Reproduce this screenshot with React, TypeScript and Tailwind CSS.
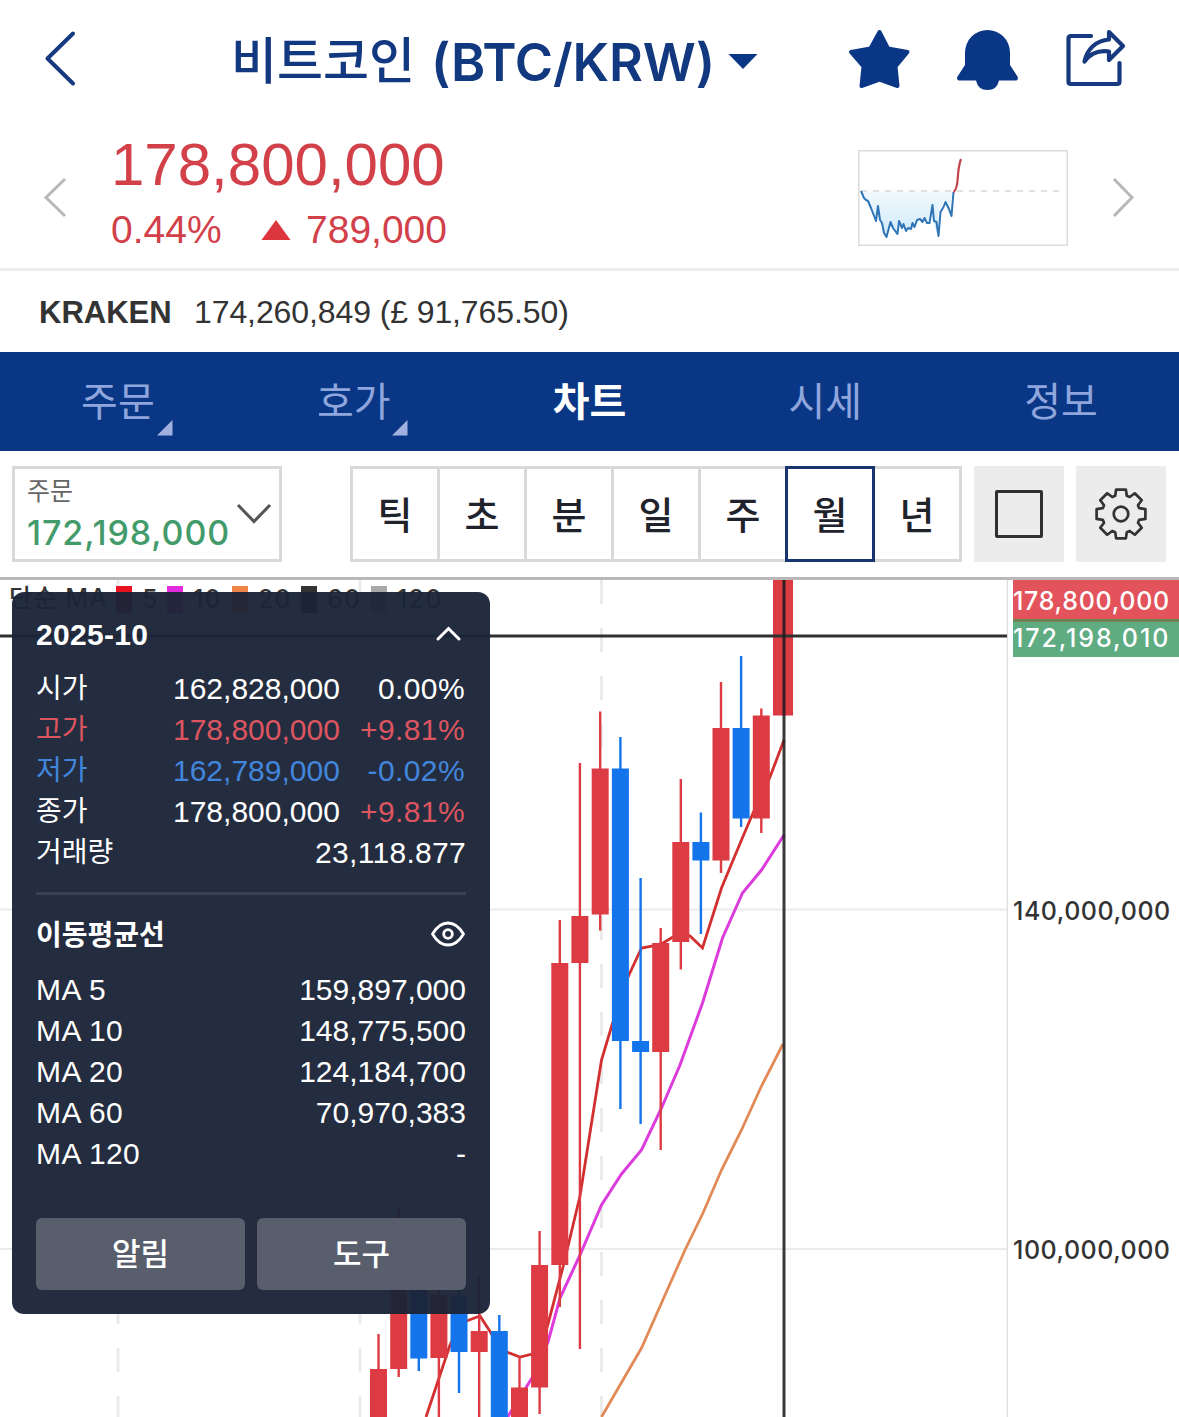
import React, { useState } from 'react';
import clsx from 'clsx';

// ─── data ─────────────────────────────────────────────────────────────────────

const navTabs = [
  { label: '주문', more: true },
  { label: '호가', more: true },
  { label: '차트', more: false },
  { label: '시세', more: false },
  { label: '정보', more: false },
];

const periods = ['틱', '초', '분', '일', '주', '월', '년'];

const legend = [
  { label: '5',   cls: 'bg-[#e8131f]', width: 'w-[25px]' },
  { label: '10',  cls: 'bg-[#e42be0]', width: 'w-[39px]' },
  { label: '20',  cls: 'bg-[#ee8445]', width: 'w-[43px]' },
  { label: '60',  cls: 'bg-[#333333]', width: 'w-[44px]' },
  { label: '120', cls: 'bg-[#a9a9a9]', width: 'w-[60px]' },
];

const ohlc = [
  { label: '시가', value: '162,828,000', rate: '0.00%',  cls: 'text-white',      rateCls: 'text-white' },
  { label: '고가', value: '178,800,000', rate: '+9.81%', cls: 'text-[#dc5560]', rateCls: 'text-[#dc5560]' },
  { label: '저가', value: '162,789,000', rate: '-0.02%', cls: 'text-[#4285dc]', rateCls: 'text-[#4285dc]' },
  { label: '종가', value: '178,800,000', rate: '+9.81%', cls: 'text-white',      rateCls: 'text-[#dc5560]' },
];

const averages = [
  ['MA 5', '159,897,000'],
  ['MA 10', '148,775,500'],
  ['MA 20', '124,184,700'],
  ['MA 60', '70,970,383'],
  ['MA 120', '-'],
];

// x, wick top, body top, body bottom, wick bottom, rising
type Candle = [number, number, number, number, number, boolean];

const candles: Candle[] = [
  [378.5, 1334, 1369, 1430, 1430, true],
  [398.7, 1207, 1280, 1369, 1377, true],
  [418.8, 1270, 1285, 1358.5, 1371, false],
  [438.9, 1285, 1295, 1358, 1430, true],
  [459, 1285, 1296, 1352, 1393, false],
  [479.2, 1277, 1331, 1352, 1430, true],
  [499.3, 1315, 1331, 1430, 1430, false],
  [519.5, 1356, 1387.5, 1430, 1430, true],
  [539.6, 1231, 1265, 1387.5, 1414, true],
  [559.8, 920, 963, 1265, 1307, true],
  [579.9, 763, 916, 963, 1349, true],
  [600.2, 711.5, 768.5, 914.5, 930.5, true],
  [620.4, 737, 768.5, 1041, 1109, false],
  [640.6, 878, 1041, 1052, 1124, false],
  [660.7, 928, 943, 1052, 1150, true],
  [680.8, 779, 842, 942, 969.5, true],
  [700.9, 812.5, 842, 860.5, 934, false],
  [721, 682, 728, 860.5, 873, true],
  [741.1, 656, 728, 818.5, 827, false],
  [761.3, 708.5, 715.5, 818.5, 833, true],
];

const ma5 = '426,1417 450,1345 461,1323 480,1316 491,1333 501,1350 520,1357 540,1352 548,1324 563,1267 580,1196 601.5,1060 612,1025 628,977 641.5,948 653,946 663,943 673,937 681,932 690,936 702.5,948 721.5,888 741.5,840 753,813 761.5,796 770,777 784,740';
const ma10 = '507,1418 532,1378 548,1342 560,1298 580,1255 601.5,1205 621.5,1174 641.5,1150 661.5,1108 680,1065 702.5,1003 722.5,938 742.5,893 761.5,870 784,835';
const ma20 = '601.5,1417 641.5,1348 661.5,1303 685,1250 703,1213 721.5,1170 741.5,1130 761.5,1086 783,1044';

// ─── icons ────────────────────────────────────────────────────────────────────

const ShareIcon = () => (
  <svg width="64" height="64" viewBox="1064 28 64 64" fill="none" stroke="#17397f" strokeWidth="4.2" strokeLinecap="round" strokeLinejoin="round">
    <path d="M1091 36H1071Q1068.500 36 1068.500 38.500V81.500Q1068.500 84 1071 84H1117Q1119.500 84 1119.500 81.500V63" />
    <path d="M1109 32 1123 46 1109 60V51.500C1098 50 1090 54 1084.500 61.500C1087 49 1096 40.500 1109 39.500Z" />
  </svg>
);

const GearIcon = () => {
  const points = Array.from({ length: 8 }, (_, i) => {
    const a = (i * Math.PI) / 4;
    return [[-5.8, -18.2], [-4.9, -24.4], [4.9, -24.4], [5.8, -18.2]]
      .map(([x, y]) => `${x * Math.cos(a) - y * Math.sin(a)},${x * Math.sin(a) + y * Math.cos(a)}`)
      .join(' ');
  }).join(' ');
  return (
    <svg width="54" height="54" viewBox="-27 -27 54 54" fill="none" stroke="#333" strokeWidth="2.7" strokeLinejoin="round">
      <polygon points={points} />
      <circle r="7.300" />
    </svg>
  );
};

const Sparkline = () => (
  <svg width="210" height="96" viewBox="0 0 210 96" fill="none">
    <defs>
      <linearGradient id="dip" x1="0" y1="0" x2="0" y2="1">
        <stop offset="0" stopColor="#f3f9fd" />
        <stop offset="1" stopColor="#cdeafa" />
      </linearGradient>
    </defs>
    <rect x=".75" y=".75" width="208.500" height="94.500" stroke="#dcdcdc" strokeWidth="1.500" />
    <path d="M3 41 6 48 10 50 13 57 18 71 20 56 23 70 25 80 28 87 32 73 37 83 39 85 41 72 44 80 47 76 49 81 52 77 54 79 56 72 58 76 61 69 64 70 68 69 70 73 73 59 75 70 79 84 81 62 85 52 89 58 92 66 94 42 96 41Z" fill="url(#dip)" />
    <path d="M3 41H203" stroke="#d8d8d8" strokeWidth="1.500" strokeDasharray="6 6" />
    <path d="M3 41 6 48 8 50 10 51 13 58 18 71 20 56 22 70 24 73 26 83 28.500 87 32.500 72 35 78 39.500 84 41 71 44 78 45.500 74 48 81 50 78 53 79 54.500 73 56.500 77 59 70 62 69 64.500 72 66.500 68 69 73 71.500 73 73 64 74.500 55 76 71 78.500 72 80.500 86 82.500 62 85.500 57 87.500 52 91 59 93.500 66 95.500 42" stroke="#2f74b5" strokeWidth="2" strokeLinejoin="round" />
    <path d="M95.500 42Q98.500 40 99.500 31Q100.500 15 103 9" stroke="#c0434c" strokeWidth="2.200" />
  </svg>
);

// ─── chart ────────────────────────────────────────────────────────────────────

const CandleChart = () => (
  <svg width="1008" height="837" viewBox="0 580 1008 837" fill="none" className="block shrink-0">
    <path d="M0 909.500H1007M0 1249H1007" stroke="#ebebeb" strokeWidth="2" />
    <path d="M118 580V1417M360 580V1417M601.500 580V1417" stroke="#ebebeb" strokeWidth="3" strokeDasharray="24 24" />
    <path d="M1007.500 580V1417" stroke="#dedede" strokeWidth="1.500" />
    <polyline points={ma20} stroke="#e28a57" strokeWidth="2.800" />
    <polyline points={ma10} stroke="#dc3cdc" strokeWidth="3" />
    <polyline points={ma5} stroke="#d23030" strokeWidth="2.800" />
    {candles.map(([x, high, top, bottom, low, up]) => (
      <g key={x} fill={up ? '#dd3b44' : '#1474ec'}>
        <rect x={x - 1.2} y={high} width="2.400" height={low - high} />
        <rect x={x - 8.5} y={top} width="17" height={bottom - top} />
      </g>
    ))}
    <rect x="773" y="580" width="20" height="135.500" fill="#dd3b44" />
    <path d="M0 636H1007" stroke="#303030" strokeWidth="3" />
    <path d="M784 580V1417" stroke="#1b1b1b" strokeOpacity=".86" strokeWidth="3" />
  </svg>
);

const InfoPanel = () => (
  <div className="absolute left-3 top-3 flex h-[722px] w-[478px] flex-col rounded-xl bg-[#1b2437]/96 px-6 pb-6 text-[30px] text-white">
    <div className="flex h-[76px] items-center justify-between pt-2">
      <span className="font-bold tracking-[0.3px]">2025-10</span>
      <svg width="34" height="20" viewBox="0 0 34 20" fill="none" stroke="#fff" strokeWidth="3" strokeLinecap="round">
        <path d="M6 15 16.500 4.500 27 15" />
      </svg>
    </div>
    {ohlc.map(row => (
      <div key={row.label} className={clsx('flex h-[41px] items-center', row.cls)}>
        <span className="w-[137px] text-[28px] leading-[41px]">{row.label}</span>
        <span className="w-[167px]">{row.value}</span>
        <span className={clsx('flex-1 pr-px text-right tracking-[0.4px]', row.rateCls)}>{row.rate}</span>
      </div>
    ))}
    <div className="flex h-[41px] items-center justify-between">
      <span className="text-[28px]">거래량</span>
      <span className="tracking-[0.3px]">23,118.877</span>
    </div>
    <div className="mt-[19px] h-[3px] shrink-0 bg-[#3a4252]" />
    <div className="flex h-[74px] items-center justify-between pt-1">
      <span className="pt-[3px] text-[28px] font-bold">이동평균선</span>
      <svg width="36" height="28" viewBox="0 0 36 28" fill="none" stroke="#fff" strokeWidth="2.800">
        <path d="M2.500 14Q9 3 18 3T33.500 14Q27 25 18 25T2.500 14Z" strokeLinejoin="round" />
        <circle cx="18" cy="14" r="4.300" />
      </svg>
    </div>
    {averages.map(([label, value]) => (
      <div key={label} className="flex h-[41px] items-center justify-between">
        <span className="tracking-[0.4px]">{label}</span>
        <span>{value}</span>
      </div>
    ))}
    <div className="mt-auto grid grid-cols-2 gap-3">
      {['알림', '도구'].map(label => (
        <button key={label} className="h-[72px] rounded-md bg-[#585e6c] pt-[2px] text-[31px] font-medium">{label}</button>
      ))}
    </div>
  </div>
);

// ─── screen ───────────────────────────────────────────────────────────────────

export default function App() {
  const [tab, setTab] = useState('차트');
  const [period, setPeriod] = useState('월');

  return (
    <div className="flex h-[1417px] w-[1179px] flex-col overflow-hidden bg-white font-['Liberation_Sans','Noto_Sans_CJK_KR',sans-serif] whitespace-nowrap">

      {/* Header */}
      <header className="flex h-[120px] shrink-0 items-center text-[#12387f]">
        <svg width="40" height="64" viewBox="0 0 40 64" fill="none" stroke="#17397f" strokeWidth="4" strokeLinecap="round" strokeLinejoin="round" className="ml-[40px]">
          <path d="M33 5.500 7.500 30.500 33 55.500" />
        </svg>
        <h1 className="ml-[151px] flex w-[484px] items-center font-['Inter','Noto_Sans_CJK_KR',sans-serif] text-[50px] font-medium">
          <span className="pb-[5px] font-['Noto_Sans_CJK_KR']">비트코인</span>
          <span className="ml-[16px] pt-[5px] text-[52px] font-semibold tracking-[-0.1px]">(BTC/KRW)</span>
        </h1>
        <svg width="32" height="16" viewBox="0 0 32 16" className="mt-[3px] ml-[12px]">
          <path d="M1.500 0H30.500L16 15Z" fill="#0a3686" />
        </svg>
        <div className="ml-[88px] flex">
          <svg width="64" height="64" viewBox="847 28 64 64" fill="#0a3686" stroke="#0a3686" strokeWidth="4" strokeLinejoin="round">
            <path d="M879.500 32 888 48.500 907.500 52 895.500 66.500 897.500 86 879.500 79.500 861.500 86 863.500 66.500 851 52 870.500 48.500Z" />
          </svg>
          <svg width="64" height="64" viewBox="955 28 64 64" fill="#0a3686" className="ml-[44px]">
            <path d="M965 52.500A22.500 22.500 0 0 1 1010 52.500V65L1017.500 76.500Q1019 80.500 1015 80.500H999Q997 90 987.500 90T976 80.500H960Q956 80.500 957.500 76.500L965 65Z" />
          </svg>
          <div className="ml-[45px]"><ShareIcon /></div>
        </div>
      </header>

      {/* Price */}
      <section className="flex h-[151px] shrink-0 border-b-[3px] border-[#ececec] text-[#d2404a]">
        <svg width="26" height="44" viewBox="0 0 26 44" fill="none" stroke="#b8b8b8" strokeWidth="3" className="mt-[55px] ml-[43px]">
          <path d="M22 4 3 22.500 22 41" />
        </svg>
        <div className="ml-[42px] w-[747px]">
          <div className="mt-[12px] h-[66px] text-[60px] leading-[66px]">178,800,000</div>
          <div className="mt-[10px] flex h-[44px] items-center text-[39px]">
            <span className="w-[150px]">0.44%</span>
            <svg width="30" height="20" viewBox="0 0 30 20"><path d="M15 0 29.500 20H.5Z" fill="#dc353d" /></svg>
            <span className="ml-[15px]">789,000</span>
          </div>
        </div>
        <div className="mt-[30px]"><Sparkline /></div>
        <svg width="26" height="44" viewBox="0 0 26 44" fill="none" stroke="#b8b8b8" strokeWidth="3" className="mt-[55px] ml-[42px]">
          <path d="M4 4 22 22.500 4 41" />
        </svg>
      </section>

      <section className="flex h-[81px] shrink-0 items-center pl-[39px] text-[32px] text-[#333]">
        <b className="w-[155px] pt-[4px] text-[31px]">KRAKEN</b>
        <span className="tracking-[-0.1px]">174,260,849 (£ 91,765.50)</span>
      </section>

      {/* Tabs */}
      <nav className="flex h-[99px] shrink-0 bg-[#0a3686]">
        {navTabs.map(({ label, more }) => (
          <button
            key={label}
            onClick={() => setTab(label)}
            className={clsx('relative flex-1 text-[40px]', tab === label ? 'font-bold text-white' : 'text-[#8fa6dd]')}
          >
            {label}
            {more && (
              <svg width="16" height="16" viewBox="0 0 16 16" className="absolute bottom-[15px] left-[156.500px]">
                <path d="M15.500 0V15.500H0Z" fill="#a0b1e0" />
              </svg>
            )}
          </button>
        ))}
      </nav>

      {/* Toolbar */}
      <div className="flex h-[129px] shrink-0 border-b-[3px] border-[#b8b8b8] pt-[15px] pl-3">
        <div className="flex h-24 w-[270px] justify-between border-[3px] border-[#d9d9d9] pr-[7px] pl-3">
          <div className="w-[204px] font-['Inter','Noto_Sans_CJK_KR',sans-serif]">
            <div className="mt-[3px] h-[38px] text-[25px] leading-[38px] text-[#666]">주문</div>
            <div className="h-[44px] text-[34px] leading-[46px] font-medium tracking-[0.9px] text-[#439b6c]">172,198,000</div>
          </div>
          <svg width="36" height="24" viewBox="0 0 36 24" fill="none" stroke="#555" strokeWidth="3" className="mt-[32px]">
            <path d="M2 4 18 20.500 34 4" />
          </svg>
        </div>
        <div className="ml-[71px] flex">
          {periods.map(p => (
            <button
              key={p}
              onClick={() => setPeriod(p)}
              className={clsx(
                'relative -ml-[3px] h-24 w-[90px] border-[3px] pb-[4px] font-[\'Noto_Sans_CJK_KR\'] text-[38px] font-medium text-[#20232c]',
                period === p ? 'z-10 border-[#17366f]' : 'border-[#d9d9d9]',
              )}
            >
              {p}
            </button>
          ))}
        </div>
        <div className="ml-3 flex h-24 w-[90px] items-center justify-center bg-[#ececec]">
          <div className="size-[48px] rounded-[2px] border-[3px] border-[#303030]" />
        </div>
        <div className="ml-3 flex h-24 w-[90px] items-center justify-center bg-[#ececec]">
          <GearIcon />
        </div>
      </div>

      {/* Chart */}
      <main className="relative flex flex-1">
        <CandleChart />
        <div className="relative flex-1 pl-[5px] font-['Inter'] text-[25px] font-medium tracking-[0.5px] text-[#333]">
          <div className="h-[39px] bg-[#e2535c] leading-[43px] tracking-[0.7px] text-white">178,800,000</div>
          <div className="h-[38px] border-t-[3px] border-[#6d8355] bg-[#5fab82] leading-[33px] tracking-[1.9px] text-white">172,198,010</div>
          <span className="absolute top-[311px] left-[5px] leading-[40px]">140,000,000</span>
          <span className="absolute top-[650px] left-[5px] leading-[40px]">100,000,000</span>
        </div>
        <div className="absolute top-1 left-[9px] flex h-[30px] items-center font-['Inter','Noto_Sans_CJK_KR',sans-serif] text-[25px] tracking-[1.2px] font-medium text-[#333]">
          <span className="w-[107px]">단순 MA</span>
          {legend.map(item => (
            <React.Fragment key={item.label}>
              <i className={clsx('mr-[10px] h-[27px] w-4', item.cls)} />
              <span className={clsx('pt-[2px]', item.width)}>{item.label}</span>
            </React.Fragment>
          ))}
        </div>
        <InfoPanel />
      </main>
    </div>
  );
}
